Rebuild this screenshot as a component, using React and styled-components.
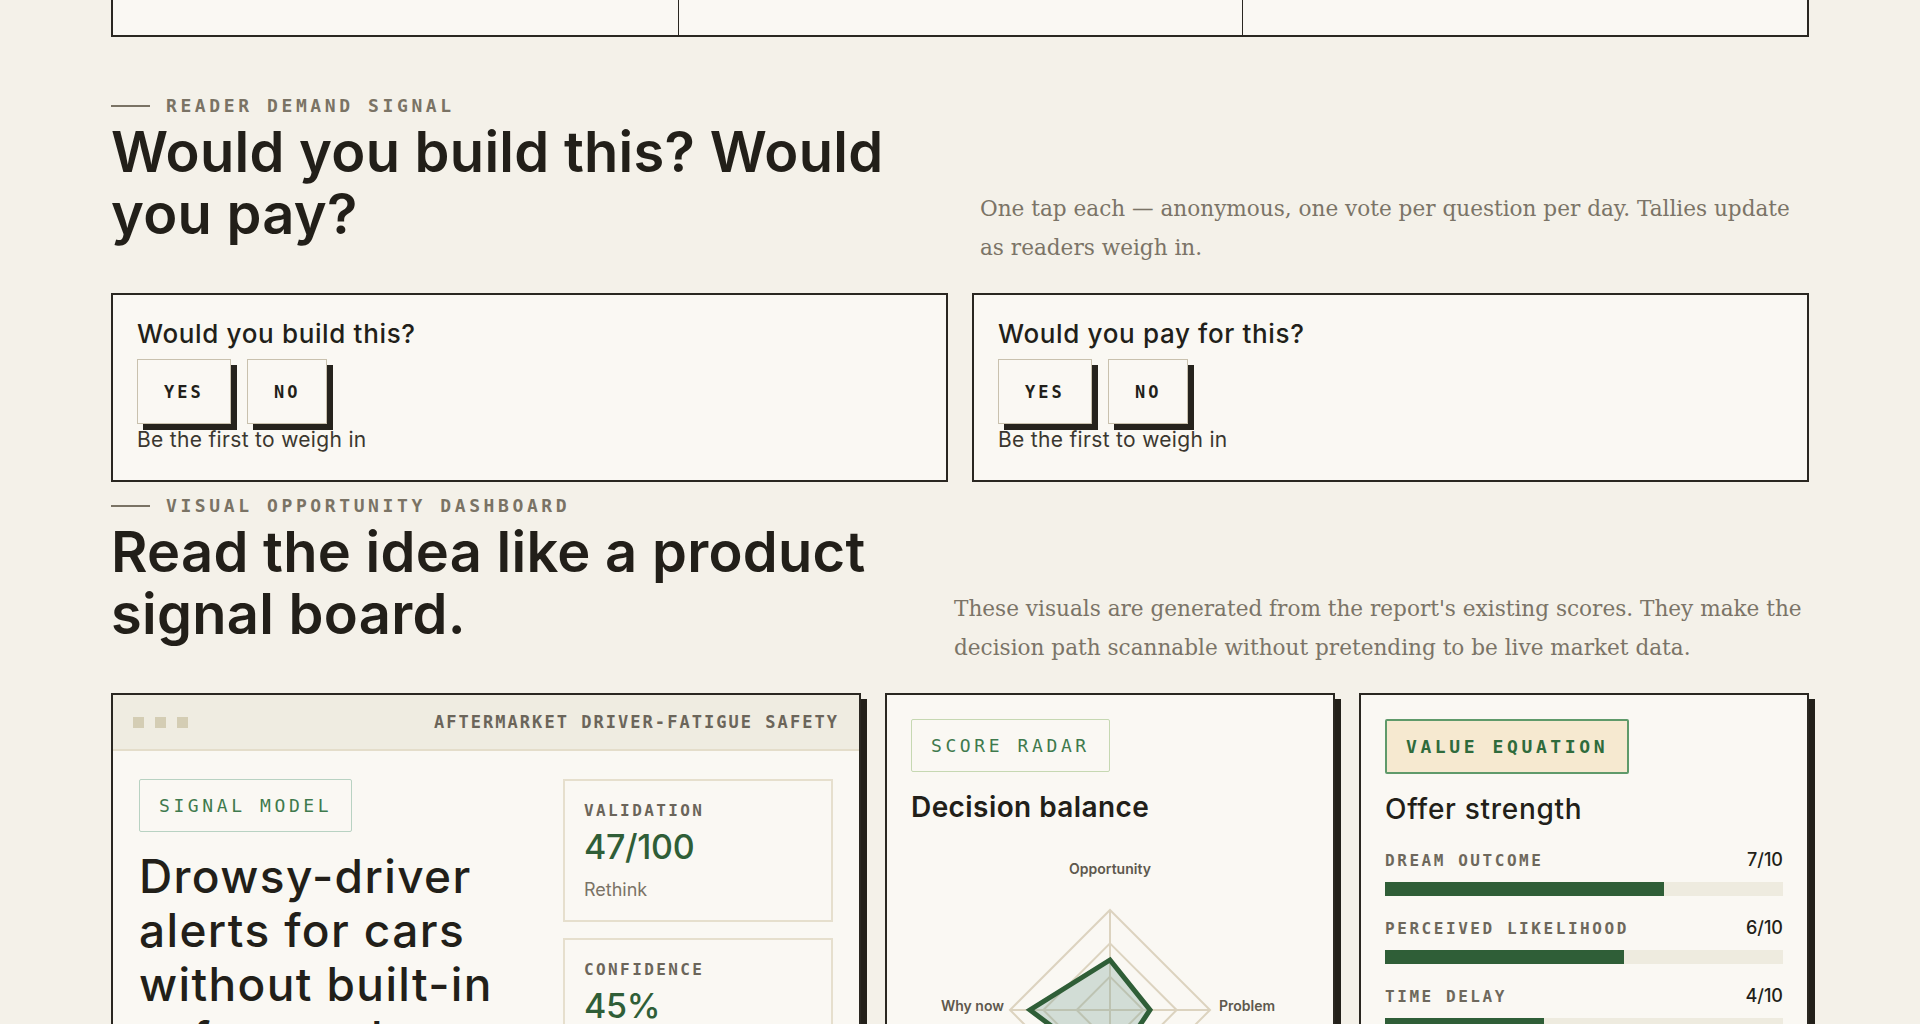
import React from "react";
import styled, { createGlobalStyle } from "styled-components";

const GlobalStyle = createGlobalStyle`
  * { box-sizing: border-box; }
  body {
    margin: 0;
    background: #f4f1e9;
    font-family: Inter, "Liberation Sans", sans-serif;
    color: #221f19;
  }
`;

const mono = `"DejaVu Sans Mono", "Liberation Mono", monospace`;

const Page = styled.main`
  width: 1698px;
  margin: 0 auto;
  padding-bottom: 120px;
`;

const StatStrip = styled.div`
  display: grid;
  grid-template-columns: repeat(3, 1fr);
  height: 37px;
  border: 2px solid #2a2721;
  border-top: 0;
  background: #faf8f3;
`;

const StatCell = styled.div`
  & + & {
    border-left: 1px solid #2a2721;
  }
`;

const Section = styled.section`
  margin-top: ${(p) => p.$top}px;
`;

const SectionHead = styled.div`
  display: flex;
  justify-content: space-between;
  align-items: flex-end;
  margin-bottom: 26px;
`;

const HeadText = styled.div`
  display: flex;
  flex-direction: column;
`;

const Eyebrow = styled.div`
  display: flex;
  align-items: center;
  gap: 16px;
  font-family: ${mono};
  font-size: 18px;
  font-weight: 700;
  line-height: 22px;
  letter-spacing: 0.2em;
  color: #7a7365;
  text-transform: uppercase;
  &::before {
    content: "";
    width: 39px;
    height: 2px;
    background: #7a7365;
  }
`;

const Title = styled.h2`
  margin: 4px 0 22px;
  max-width: 820px;
  font-size: 56px;
  line-height: 62px;
  font-weight: 600;
  letter-spacing: 0.005em;
  color: #221f19;
`;

const Lede = styled.p`
  margin: 0;
  width: ${(p) => p.$width}px;
  font-family: "DejaVu Serif", "Liberation Serif", serif;
  font-size: 21.6px;
  line-height: 39px;
  color: #7b7467;
`;

const VoteGrid = styled.div`
  display: grid;
  grid-template-columns: 1fr 1fr;
  gap: 24px;
`;

const VoteCard = styled.div`
  border: 2px solid #2a2721;
  background: #faf8f3;
  padding: 24px 24px 28px;
`;

const VoteQuestion = styled.h3`
  margin: 0 0 10px;
  font-size: 26px;
  line-height: 30px;
  font-weight: 500;
  letter-spacing: 0.025em;
`;

const VoteButtons = styled.div`
  display: flex;
  gap: 16px;
`;

const VoteButton = styled.button`
  height: 65px;
  padding: 0 26px;
  border: 1px solid #c9c1ae;
  background: #faf8f3;
  box-shadow: 6px 6px 0 #26231d;
  font-family: ${mono};
  font-size: 17px;
  font-weight: 700;
  letter-spacing: 0.18em;
  color: #221f19;
  cursor: pointer;
`;

const VoteCaption = styled.div`
  margin-top: 4px;
  font-size: 21px;
  line-height: 24px;
  letter-spacing: 0.015em;
  color: #3b372f;
`;

const DashGrid = styled.div`
  display: grid;
  grid-template-columns: 5fr 3fr 3fr;
  gap: 24px;
  align-items: start;
`;

const DashCard = styled.div`
  border: 2px solid #2a2721;
  background: #faf8f3;
  box-shadow: 6px 6px 0 #23201a;
  padding: ${(p) => p.$pad || "24px"};
  min-height: 420px;
`;

const TopBar = styled.div`
  display: flex;
  align-items: center;
  justify-content: space-between;
  height: 56px;
  padding: 0 20px;
  background: #efece1;
  border-bottom: 2px solid #e4ddca;
`;

const Dots = styled.div`
  display: flex;
  gap: 11px;
`;

const Dot = styled.span`
  width: 11px;
  height: 11px;
  background: #d4cdb4;
`;

const BarLabel = styled.div`
  font-family: ${mono};
  font-size: 17px;
  font-weight: 700;
  letter-spacing: 0.12em;
  color: #6b655a;
`;

const CardBody = styled.div`
  display: grid;
  grid-template-columns: 1fr 270px;
  gap: 24px;
  padding: 28px 26px 26px;
`;

const Tag = styled.div`
  display: inline-block;
  padding: 15px 19px;
  border: ${(p) => (p.$variant === "value" ? "2px solid #5f9a6a" : `1px solid ${p.$variant === "radar" ? "#c6d8b2" : "#b8d2c2"}`)};
  border-radius: 2px;
  background: ${(p) => (p.$variant === "value" ? "#f6e9d0" : "transparent")};
  font-family: ${mono};
  font-size: 18px;
  line-height: 21px;
  font-weight: ${(p) => (p.$variant === "value" ? 700 : 400)};
  letter-spacing: 0.2em;
  color: ${(p) => (p.$variant === "value" ? "#2f6b3c" : "#3f7a4d")};
`;

const Headline = styled.h3`
  margin: 17px 0 0;
  font-size: 46px;
  line-height: 54px;
  font-weight: 500;
  letter-spacing: 0.03em;
  color: #221f19;
`;

const MetricStack = styled.div`
  display: flex;
  flex-direction: column;
  gap: 16px;
`;

const MetricBox = styled.div`
  border: 2px solid #e6dfcd;
  padding: 20px 19px 19px;
`;

const MetricLabel = styled.div`
  font-family: ${mono};
  font-size: 16px;
  line-height: 20px;
  font-weight: 700;
  letter-spacing: 0.15em;
  color: #6b655a;
`;

const MetricValue = styled.div`
  margin-top: 7px;
  font-size: 34px;
  line-height: 38px;
  font-weight: 500;
  letter-spacing: -0.01em;
  color: #2f5e37;
`;

const MetricNote = styled.div`
  margin-top: 13px;
  font-size: 18px;
  line-height: 22px;
  color: #7a7366;
`;

const CardTitle = styled.h3`
  margin: 18px 0 0;
  font-size: 28px;
  line-height: 34px;
  font-weight: ${(p) => p.$weight || 600};
  letter-spacing: ${(p) => (p.$weight === 500 ? "0.025em" : "0.015em")};
  color: #221f19;
`;

const RadarWrap = styled.div`
  display: flex;
  justify-content: center;
  margin-top: 26px;
`;

const Bars = styled.div`
  display: flex;
  flex-direction: column;
  gap: 22px;
  margin-top: 24px;
`;

const BarHead = styled.div`
  display: flex;
  justify-content: space-between;
  align-items: baseline;
  line-height: 20px;
`;

const BarName = styled.span`
  font-family: ${mono};
  font-size: 16px;
  font-weight: 700;
  letter-spacing: 0.16em;
  color: #6e685c;
`;

const BarScore = styled.span`
  font-size: 18px;
  font-weight: 500;
  color: #221f19;
`;

const Track = styled.div`
  height: 14px;
  margin-top: 11px;
  background: #eeebdf;
`;

const Fill = styled.div`
  height: 100%;
  background: #2f5e37;
`;

function Radar() {
  const cx = 180;
  const cy = 160;
  const R = 100;
  const ring = (k) =>
    `${cx},${cy - R * k} ${cx + R * k},${cy} ${cx},${cy + R * k} ${cx - R * k},${cy}`;
  const data = { top: 0.5, right: 0.4, bottom: 0.6, left: 0.8 };
  const shape = `${cx},${cy - R * data.top} ${cx + R * data.right},${cy} ${cx},${cy + R * data.bottom} ${cx - R * data.left},${cy}`;
  const label = { fontFamily: "Inter, sans-serif", fontSize: 14, fontWeight: 600, fill: "#5e584d" };
  return (
    <svg width="360" height="300" viewBox="0 0 360 300">
      {[1 / 3, 2 / 3, 1].map((k) => (
        <polygon key={k} points={ring(k)} fill="none" stroke="#dcd3bf" strokeWidth="2" />
      ))}
      <line x1={cx} y1={cy - R} x2={cx} y2={cy + R} stroke="#dcd3bf" strokeWidth="2" />
      <line x1={cx - R} y1={cy} x2={cx + R} y2={cy} stroke="#dcd3bf" strokeWidth="2" />
      <polygon points={shape} fill="rgba(120,160,150,0.3)" stroke="#2f5e37" strokeWidth="5" strokeLinejoin="miter" />
      <text x={cx} y={24} textAnchor="middle" {...label}>Opportunity</text>
      <text x={74} y={161} textAnchor="end" {...label}>Why now</text>
      <text x={289} y={161} textAnchor="start" {...label}>Problem</text>
      <text x={cx} y={292} textAnchor="middle" {...label}>Feasibility</text>
    </svg>
  );
}

const questions = ["Would you build this?", "Would you pay for this?"];

const offer = [
  { name: "Dream outcome", score: 7 },
  { name: "Perceived likelihood", score: 6 },
  { name: "Time delay", score: 4 },
  { name: "Effort & sacrifice", score: 5 },
];

export default function App() {
  return (
    <>
      <GlobalStyle />
      <Page>
        <StatStrip>
          <StatCell />
          <StatCell />
          <StatCell />
        </StatStrip>

        <Section $top={58}>
          <SectionHead>
            <HeadText>
              <Eyebrow>Reader demand signal</Eyebrow>
              <Title>Would you build this? Would you pay?</Title>
            </HeadText>
            <Lede $width={829}>
              One tap each — anonymous, one vote per question per day. Tallies update as readers weigh in.
            </Lede>
          </SectionHead>
          <VoteGrid>
            {questions.map((q) => (
              <VoteCard key={q}>
                <VoteQuestion>{q}</VoteQuestion>
                <VoteButtons>
                  <VoteButton>YES</VoteButton>
                  <VoteButton>NO</VoteButton>
                </VoteButtons>
                <VoteCaption>Be the first to weigh in</VoteCaption>
              </VoteCard>
            ))}
          </VoteGrid>
        </Section>

        <Section $top={13}>
          <SectionHead>
            <HeadText>
              <Eyebrow>Visual opportunity dashboard</Eyebrow>
              <Title>Read the idea like a product signal board.</Title>
            </HeadText>
            <Lede $width={855}>
              These visuals are generated from the report's existing scores. They make the decision path scannable without pretending to be live market data.
            </Lede>
          </SectionHead>
          <DashGrid>
            <DashCard $pad="0">
              <TopBar>
                <Dots>
                  <Dot />
                  <Dot />
                  <Dot />
                </Dots>
                <BarLabel>AFTERMARKET DRIVER-FATIGUE SAFETY</BarLabel>
              </TopBar>
              <CardBody>
                <div>
                  <Tag>SIGNAL MODEL</Tag>
                  <Headline>Drowsy-driver alerts for cars without built-in safety tech</Headline>
                </div>
                <MetricStack>
                  <MetricBox>
                    <MetricLabel>VALIDATION</MetricLabel>
                    <MetricValue>47/100</MetricValue>
                    <MetricNote>Rethink</MetricNote>
                  </MetricBox>
                  <MetricBox>
                    <MetricLabel>CONFIDENCE</MetricLabel>
                    <MetricValue>45%</MetricValue>
                    <MetricNote>Moderate</MetricNote>
                  </MetricBox>
                </MetricStack>
              </CardBody>
            </DashCard>

            <DashCard>
              <Tag $variant="radar">SCORE RADAR</Tag>
              <CardTitle>Decision balance</CardTitle>
              <RadarWrap>
                <Radar />
              </RadarWrap>
            </DashCard>

            <DashCard>
              <Tag $variant="value">VALUE EQUATION</Tag>
              <CardTitle $weight={500}>Offer strength</CardTitle>
              <Bars>
                {offer.map((b) => (
                  <div key={b.name}>
                    <BarHead>
                      <BarName>{b.name.toUpperCase()}</BarName>
                      <BarScore>{b.score}/10</BarScore>
                    </BarHead>
                    <Track>
                      <Fill style={{ width: `${b.score * 10}%` }} />
                    </Track>
                  </div>
                ))}
              </Bars>
            </DashCard>
          </DashGrid>
        </Section>
      </Page>
    </>
  );
}
